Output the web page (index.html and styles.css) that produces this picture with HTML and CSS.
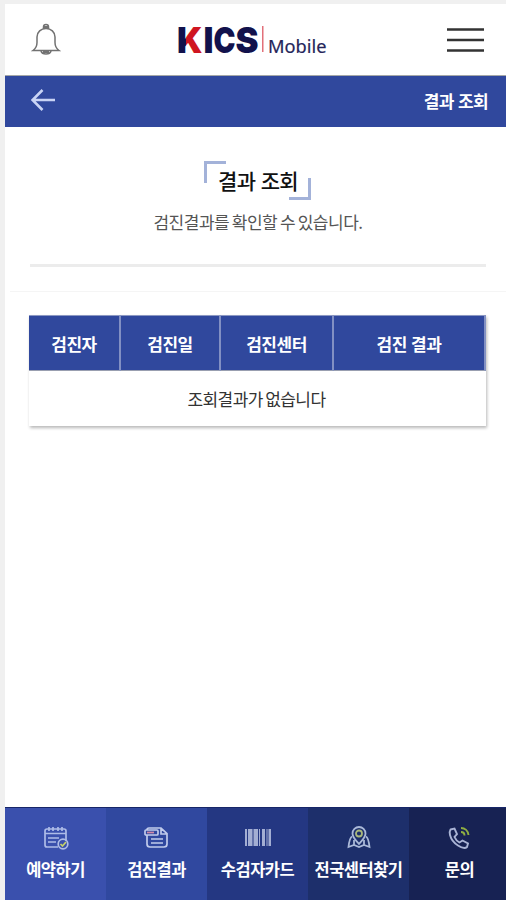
FILE: index.html
```html
<!DOCTYPE html>
<html lang="ko">
<head>
    <meta charset="UTF-8">
    <meta name="viewport" content="width=device-width, initial-scale=1.0">
    <title>KICS Mobile - 결과 조회</title>
    <link rel="stylesheet" href="styles.css">
</head>
<body>
    <div class="app">
        <!-- Header -->
        <header class="header">
            <button class="icon-btn" aria-label="알림">
                <svg width="30" height="34" viewBox="0 0 30 34" fill="none" stroke="#727272" stroke-width="1.5">
                    <path d="M12.5 5.5V4a2.5 2.5 0 0 1 5 0v1.500M2 27.500c2-1.500 4-4 4-8V14c0-5 4-8.500 9-8.500s9 3.500 9 8.500v5.500c0 4 2 6.500 4 8zM10 28c1 4 9 4 10 0"/>
                    <path d="M13 4h4M12 29h6" stroke-width="2"/>
                </svg>
            </button>
            <svg class="logo" width="152" height="44" viewBox="0 -4 152 44">
                <defs>
                    <linearGradient id="logoK" gradientUnits="userSpaceOnUse" x1="0" y1="0" x2="26" y2="0">
                        <stop offset="0.38" stop-color="#12124c"/>
                        <stop offset="0.38" stop-color="#cf1521"/>
                    </linearGradient>
                </defs>
                <text class="logo-name" x="1" y="30.500" textLength="25.500" lengthAdjust="spacingAndGlyphs" fill="url(#logoK)">K</text>
                <text class="logo-name" x="27.500" y="30.500" textLength="10" lengthAdjust="spacingAndGlyphs" fill="#12124c">I</text>
                <text class="logo-name" x="37.500" y="30.500" textLength="22" lengthAdjust="spacingAndGlyphs" fill="#12124c">C</text>
                <text class="logo-name" x="59.500" y="30.500" textLength="23" lengthAdjust="spacingAndGlyphs" fill="#12124c">S</text>
                <rect x="86" y="4" width="1.500" height="26" fill="#e2707a"/>
                <text class="logo-sub" x="92" y="30.500" textLength="58.500" lengthAdjust="spacingAndGlyphs">Mobile</text>
            </svg>
            <button class="icon-btn" aria-label="메뉴">
                <svg width="38" height="28" viewBox="0 0 38 28" stroke="#333" stroke-width="2.600">
                    <path d="M0 3.500h37M0 14h37M0 24.500h37"/>
                </svg>
            </button>
        </header>

        <div class="title-bar">
            <svg width="26" height="24" viewBox="0 0 26 24" fill="none" stroke="#c9d4f5" stroke-width="2.600">
                <path d="M11.500 2L1.500 12l10 10M2 12h22"/>
            </svg>
            <span>결과 조회</span>
        </div>

        <!-- Content -->
        <main class="content">
            <section class="intro">
                <h1>결과 조회</h1>
                <p>검진결과를 확인할 수 있습니다.</p>
            </section>
            <section class="results">
                <table>
                    <thead>
                        <tr>
                            <th class="col-name">검진자</th>
                            <th class="col-date">검진일</th>
                            <th class="col-center">검진센터</th>
                            <th>검진 결과</th>
                        </tr>
                    </thead>
                    <tbody>
                        <tr>
                            <td colspan="4">조회결과가 없습니다</td>
                        </tr>
                    </tbody>
                </table>
            </section>
        </main>

        <!-- Bottom menu -->
        <nav class="bottom-nav">
            <a class="nav-item reserve">
                <svg width="28" height="26" viewBox="0 0 28 26" fill="none" stroke="#aebce8" stroke-width="1.700">
                    <path d="M16 21H5a2 2 0 0 1-2-2V5a2 2 0 0 1 2-2h17a2 2 0 0 1 2 2v10M3 7.500h21M7 1v4M11 1v4M16 1v4M20 1v4M6 12h11M6 16h8"/>
                    <circle cx="21" cy="18" r="4.800"/>
                    <path d="M18.500 18l2 2 3.500-4" stroke="#c6d269"/>
                </svg>
                <span>예약하기</span>
            </a>
            <a class="nav-item result">
                <svg width="28" height="26" viewBox="0 0 28 26" fill="none" stroke="#c0cbec" stroke-width="1.700">
                    <path d="M4 9v9a3 3 0 0 0 3 3h14a3 3 0 0 0 3-3V7.500L18 2H6a2 2 0 0 0-2 2M18 2v6h6M8 13h12M8 17h12"/>
                    <rect x="2" y="4" width="13" height="5" rx="1"/>
                    <path d="M4 6.500h7" stroke="#d18aa8"/>
                </svg>
                <span>검진결과</span>
            </a>
            <a class="nav-item card">
                <svg width="28" height="26" viewBox="0 0 28 26" fill="#a3aed3">
                    <path d="M1 3h2v17H1zM4 3h4v17H4zM8.500 3h1v17h-1zM10 3h4v17h-4zM15 3h1v17h-1zM18 3h3v17h-3zM22.500 3h1v17h-1zM24.500 3h2.500v17h-2.500z"/>
                </svg>
                <span>수검자카드</span>
            </a>
            <a class="nav-item centers">
                <svg width="28" height="26" viewBox="0 0 28 26" fill="none" stroke="#aab9d8" stroke-width="1.800">
                    <path d="M14 18c-3-3.500-6.500-6.500-6.500-10.500a6.500 6.500 0 0 1 13 0c0 4-3.500 7-6.500 10.500z"/>
                    <circle cx="14" cy="7.500" r="3" stroke="#a9b87c"/>
                    <path d="M7 10.500c-2 1-3 6-3.500 10.500l5.500-2 5 2 5-2 5.500 2c-.500-4.500-1.500-9.500-3.500-10.500M9 14v5M19 14v5"/>
                </svg>
                <span>전국센터찾기</span>
            </a>
            <a class="nav-item contact">
                <svg width="28" height="26" viewBox="0 0 28 26" fill="none" stroke="#aab4d5" stroke-width="1.900">
                    <path d="M4.500 3.500l4-1 2.500 5.500-2.500 3c1 2.500 2.500 4 5 5.500l3-2 5.500 3-1 3.500c-2 2-6 .5-9-1.500-4-2.500-7-6.500-8-10.500-.500-2-.800-3.500.500-5.500z"/>
                    <path d="M15 2c4 0 7 3 7.500 7M15 6c2 0 3.500 1.500 3.500 3.500" stroke="#8fae42"/>
                </svg>
                <span>문의</span>
            </a>
        </nav>
    </div>
</body>
</html>
```
FILE: styles.css
```css
*,
*::before,
*::after {
    box-sizing: border-box;
}
body {
    margin: 0;
    background: #f0f0f0;
    font-family: "Noto Sans CJK KR", sans-serif;
    font-size: 16px;
    color: #333;
}
.app {
    display: flex;
    flex-direction: column;
    height: 100vh;
    padding: 4px 0 0 5px;
}
.header {
    display: flex;
    justify-content: space-between;
    align-items: center;
    height: 72px;
    padding: 0 21px 0 26px;
    background: #fff;
    border-bottom: 1px solid #a5a8a8;
}
.icon-btn {
    display: flex;
    padding: 0;
    border: 0;
    background: none;
}
.logo {
    margin-right: 4px;
    overflow: visible;
}
.logo-name {
    font-family: Inter, sans-serif;
    font-size: 36px;
    font-weight: 900;
}
.logo-sub {
    font-family: "Noto Sans", sans-serif;
    font-size: 18.5px;
    font-weight: 400;
    fill: #25255a;
    stroke: #25255a;
    stroke-width: 0.2px;
}
.title-bar {
    display: flex;
    justify-content: space-between;
    align-items: center;
    height: 51px;
    padding: 0 18px 3px 26px;
    background: #30489d;
    color: #fff;
    font-size: 17px;
    font-weight: 700;
    letter-spacing: -0.6px;
}
.content {
    flex: 1;
    background: #fff;
}
.intro {
    height: 165px;
    margin-left: 5px;
    padding: 34px 20px 0;
    border-bottom: 1px solid #f5f5f5;
    text-align: center;
}
/* corner brackets around the page title */
.intro h1 {
    position: relative;
    width: 107px;
    height: 39px;
    margin: 0 auto;
    padding-left: 2px;
    left: -1px;
    color: #111;
    font-size: 21px;
    font-weight: 500;
    letter-spacing: -0.6px;
    line-height: 39px;
}
.intro h1::before,
.intro h1::after {
    content: "";
    position: absolute;
    width: 22px;
    height: 22px;
}
.intro h1::before {
    top: 0;
    left: 0;
    border-top: 3px solid #a3b2d9;
    border-left: 3px solid #a3b2d9;
}
.intro h1::after {
    right: 0;
    bottom: 0;
    border-right: 3px solid #a3b2d9;
    border-bottom: 3px solid #a3b2d9;
}
.intro p {
    margin: 0;
    padding: 9px 0 29px;
    border-bottom: 3px solid #ececec;
    color: #555;
    font-size: 17px;
    letter-spacing: -0.5px;
    word-spacing: -1.6px;
    line-height: 26px;
}
.results {
    padding: 23px 20px 0 24px;
}
table {
    width: 100%;
    border-collapse: separate;
    border-spacing: 0;
    table-layout: fixed;
    box-shadow: 1px 2px 3px rgba(0, 0, 0, 0.28);
}
th {
    height: 56px;
    padding: 0;
    border-top: 1px solid #8c98c2;
    border-right: 2px solid #8290c3;
    border-bottom: 1px solid #999fb0;
    background: #30489d;
    color: #fff;
    font-size: 17px;
    font-weight: 700;
    letter-spacing: -0.5px;
}
.col-name {
    width: 92px;
}
.col-date {
    width: 100px;
}
.col-center {
    width: 113px;
}
td {
    height: 55px;
    padding: 0 2px 0 0;
    background: #fff;
    text-align: center;
    font-size: 17px;
    letter-spacing: -0.6px;
    word-spacing: -1.6px;
}
.bottom-nav {
    display: grid;
    grid-template-columns: repeat(5, 101px);
    height: 93px;
    overflow: hidden;
}
.nav-item {
    display: flex;
    flex-direction: column;
    align-items: center;
    gap: 5px;
    padding-top: 18px;
    border-top: 1px solid #172668;
    color: #fff;
    font-size: 16.5px;
    font-weight: 700;
    letter-spacing: -0.5px;
    line-height: 24px;
    white-space: nowrap;
}
.reserve {
    background: #3a50ad;
}
.result {
    background: #30489f;
}
.card {
    background: #243782;
}
.centers {
    background: #1d2f6b;
}
.contact {
    background: #172253;
}
```
